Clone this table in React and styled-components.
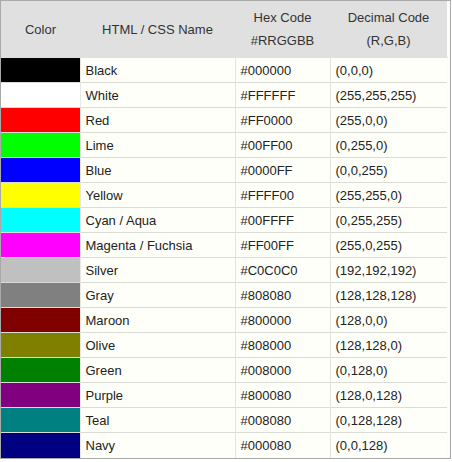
import React from 'react';
import styled, { createGlobalStyle } from 'styled-components';

const GlobalStyle = createGlobalStyle`
  body {
    margin: 0;
    background: #ffffff;
    font-family: "Liberation Sans", Arial, sans-serif;
  }
`;

const Frame = styled.div`
  width: 447px;
  padding-right: 2px;
  border: 1px solid #a9a9a9;
  background: #fdfdf8;
  box-sizing: content-box;
`;

const Table = styled.table`
  width: 446px;
  border-collapse: collapse;
  table-layout: fixed;
  font-size: 13px;
  color: #222;
`;

const HeadCell = styled.th`
  height: 56px;
  padding: 0;
  background: #e0e0e0;
  font-weight: normal;
  text-align: center;
  line-height: 23px;
  color: #333;
  border-bottom: 1px solid #e0e0e0;
`;

const Row = styled.tr`
  height: 25px;
  & + & td {
    border-top: 1px solid #dcdcd6;
  }
`;

const Swatch = styled.td`
  padding: 0;
  background: ${p => p.$color};
  border-right: 1px solid #e8e8e0;
`;

const Cell = styled.td`
  padding: 0 5px;
  background: #fffffa;
  white-space: nowrap;
  border-right: 1px solid ${p => (p.$last ? 'transparent' : '#e3e3dc')};
`;

const colors = [
  ['#000000', 'Black', '#000000', '(0,0,0)'],
  ['#ffffff', 'White', '#FFFFFF', '(255,255,255)'],
  ['#ff0000', 'Red', '#FF0000', '(255,0,0)'],
  ['#00ff00', 'Lime', '#00FF00', '(0,255,0)'],
  ['#0000ff', 'Blue', '#0000FF', '(0,0,255)'],
  ['#ffff00', 'Yellow', '#FFFF00', '(255,255,0)'],
  ['#00ffff', 'Cyan / Aqua', '#00FFFF', '(0,255,255)'],
  ['#ff00ff', 'Magenta / Fuchsia', '#FF00FF', '(255,0,255)'],
  ['#c0c0c0', 'Silver', '#C0C0C0', '(192,192,192)'],
  ['#808080', 'Gray', '#808080', '(128,128,128)'],
  ['#800000', 'Maroon', '#800000', '(128,0,0)'],
  ['#808000', 'Olive', '#808000', '(128,128,0)'],
  ['#008000', 'Green', '#008000', '(0,128,0)'],
  ['#800080', 'Purple', '#800080', '(128,0,128)'],
  ['#008080', 'Teal', '#008080', '(0,128,128)'],
  ['#000080', 'Navy', '#000080', '(0,0,128)'],
];

const App = () => (
  <>
    <GlobalStyle />
    <Frame>
      <Table>
        <colgroup>
          <col style={{ width: 79 }} />
          <col style={{ width: 155 }} />
          <col style={{ width: 95 }} />
          <col style={{ width: 117 }} />
        </colgroup>
        <thead>
          <tr>
            <HeadCell>Color</HeadCell>
            <HeadCell>HTML / CSS Name</HeadCell>
            <HeadCell>Hex Code<br />#RRGGBB</HeadCell>
            <HeadCell>Decimal Code<br />(R,G,B)</HeadCell>
          </tr>
        </thead>
        <tbody>
          {colors.map(([swatch, name, hex, dec]) => (
            <Row key={name}>
              <Swatch $color={swatch} />
              <Cell>{name}</Cell>
              <Cell>{hex}</Cell>
              <Cell $last>{dec}</Cell>
            </Row>
          ))}
        </tbody>
      </Table>
    </Frame>
  </>
);

export default App;
